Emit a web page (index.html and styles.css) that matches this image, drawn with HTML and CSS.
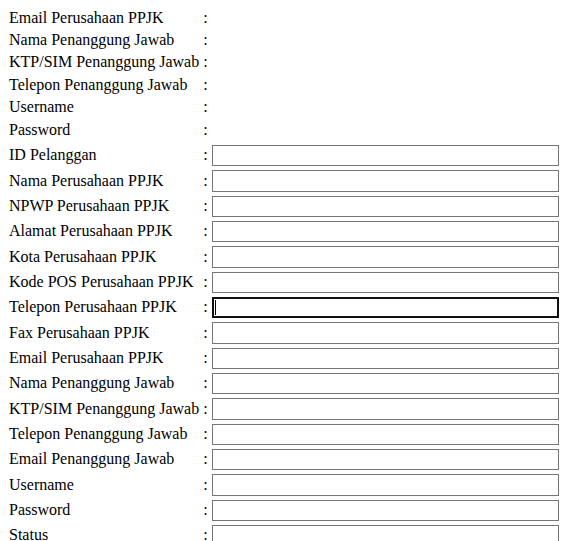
FILE: index.html
```html
<!DOCTYPE html>
<html>
<head>
<meta charset="utf-8">
<link rel="stylesheet" href="styles.css">
</head>
<body>
<table class="info">
  <tr><td>Email Perusahaan PPJK</td><td>:</td><td></td></tr>
  <tr><td>Nama Penanggung Jawab</td><td>:</td><td></td></tr>
  <tr><td>KTP/SIM Penanggung Jawab</td><td>:</td><td></td></tr>
  <tr><td>Telepon Penanggung Jawab</td><td>:</td><td></td></tr>
  <tr><td>Username</td><td>:</td><td></td></tr>
  <tr><td>Password</td><td>:</td><td></td></tr>
</table>
<table class="form">
  <tr><td>ID Pelanggan</td><td>:</td><td><input class="field" type="text"></td></tr>
  <tr><td>Nama Perusahaan PPJK</td><td>:</td><td><input class="field" type="text"></td></tr>
  <tr><td>NPWP Perusahaan PPJK</td><td>:</td><td><input class="field" type="text"></td></tr>
  <tr><td>Alamat Perusahaan PPJK</td><td>:</td><td><input class="field" type="text"></td></tr>
  <tr><td>Kota Perusahaan PPJK</td><td>:</td><td><input class="field" type="text"></td></tr>
  <tr><td>Kode POS Perusahaan PPJK</td><td>:</td><td><input class="field" type="text"></td></tr>
  <tr><td>Telepon Perusahaan PPJK</td><td>:</td><td><span class="focus-wrap"><input class="field field-focus" type="text"><span class="caret"></span></span></td></tr>
  <tr><td>Fax Perusahaan PPJK</td><td>:</td><td><input class="field" type="text"></td></tr>
  <tr><td>Email Perusahaan PPJK</td><td>:</td><td><input class="field" type="text"></td></tr>
  <tr><td>Nama Penanggung Jawab</td><td>:</td><td><input class="field" type="text"></td></tr>
  <tr><td>KTP/SIM Penanggung Jawab</td><td>:</td><td><input class="field" type="text"></td></tr>
  <tr><td>Telepon Penanggung Jawab</td><td>:</td><td><input class="field" type="text"></td></tr>
  <tr><td>Email Penanggung Jawab</td><td>:</td><td><input class="field" type="text"></td></tr>
  <tr><td>Username</td><td>:</td><td><input class="field" type="text"></td></tr>
  <tr><td>Password</td><td>:</td><td><input class="field" type="password"></td></tr>
  <tr><td>Status</td><td>:</td><td><input class="field" type="text"></td></tr>
</table>
</body>
</html>
```

FILE: styles.css
```css
html, body {
  overflow: hidden;
}
body {
  margin: 5.5px 6px;
  font-family: "Liberation Serif", "Times New Roman", serif;
  font-size: 16px;
  line-height: 18.4px;
  color: #000;
  background: #fff;
}
table {
  border-collapse: separate;
  border-spacing: 2px;
}
td {
  padding: 1px;
  vertical-align: middle;
}
.field {
  box-sizing: border-box;
  display: block;
  width: 347px;
  height: 21.33px;
  margin: 0;
  padding: 1px 2px;
  border: 1px solid #767676;
  border-radius: 0;
  background: #fff;
  font-family: Arial, "Liberation Sans", sans-serif;
  font-size: 13px;
  outline: none;
}
.field-focus {
  border: 2px solid #101010;
}
.focus-wrap {
  position: relative;
  display: block;
}
.caret {
  position: absolute;
  left: 3px;
  top: 3px;
  width: 1px;
  height: 15px;
  background: #000;
}
```
